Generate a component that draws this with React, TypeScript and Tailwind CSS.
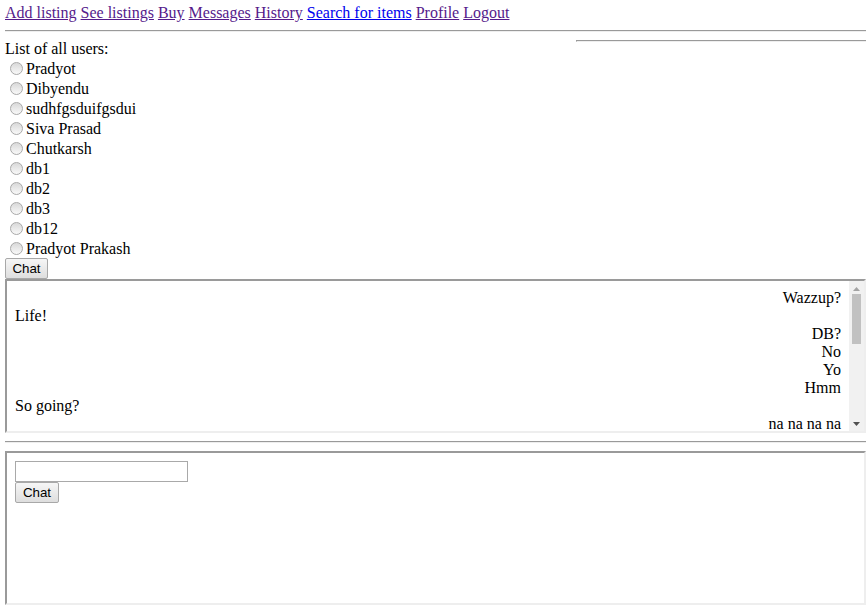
import React from "react";

const USERS = ["Pradyot", "Dibyendu", "sudhfgsduifgsdui", "Siva Prasad", "Chutkarsh", "db1", "db2", "db3", "db12", "Pradyot Prakash"];
const NAV = ["Add listing", "See listings", "Buy", "Messages", "History", "Search for items", "Profile", "Logout"];
const MSGS: { t: string; me: boolean }[] = [
  { t: "Wazzup?", me: true },
  { t: "Life!", me: false },
  { t: "DB?", me: true },
  { t: "No", me: true },
  { t: "Yo", me: true },
  { t: "Hmm", me: true },
  { t: "So going?", me: false },
  { t: "na na na na", me: true },
];

const BTN = "h-[21px] px-[6px] bg-linear-to-b from-[#f6f6f6] to-[#dedede] border border-[#a8a8a8] rounded-[2px] text-[13.33px] leading-none text-black [font-family:'Liberation_Sans',Arial,sans-serif]";
const FRAME = "w-[861px] h-[154px] border-2 border-t-[#9a9a9a] border-l-[#9a9a9a] border-b-[#eeeeee] border-r-[#eeeeee] overflow-hidden";

function Radio() {
  return <span className="ml-[5px] mr-[3px] w-[13px] h-[13px] rounded-full border border-[#a9a9a9] bg-linear-to-b from-[#d8d8d8] to-[#f9f9f9] shrink-0" />;
}

function Hr({ className = "" }: { className?: string }) {
  return <div className={`h-[2px] border-t border-t-[#9a9a9a] border-b border-b-[#eeeeee] ${className}`} />;
}

export default function App() {
  return (
    <div className="w-[866px] h-[607px] overflow-hidden bg-white text-black text-[16px] leading-[18px] [font-family:'Liberation_Serif','Times_New_Roman',serif] pl-[5px] pt-[4px]">
      <nav className="h-[18px] whitespace-nowrap">
        {NAV.map((n, i) => (
          <React.Fragment key={n}>
            <a href="#" className={`underline ${n === "Search for items" ? "text-[#0000ee]" : "text-[#551a8b]"}`}>{n}</a>
            {i < NAV.length - 1 && " "}
          </React.Fragment>
        ))}
      </nav>
      <Hr className="mt-[8px] mb-[8px] w-[861px]" />
      <div className="float-right w-[290px] h-[2px] border-t border-l border-t-[#9a9a9a] border-l-[#9a9a9a] border-b border-b-[#eeeeee]" />
      <div className="h-[18px]">List of all users:</div>
      <div>
        {USERS.map(u => (
          <label key={u} className="flex items-center h-[20px] pt-[1px]">
            <Radio />
            <span className="pt-[1px]">{u}</span>
          </label>
        ))}
      </div>
      <button className={`${BTN} w-[43px] block`}>Chat</button>
      <div className={`${FRAME} flex`}>
        <div className="flex-1 pt-[8px] px-[8px]">
          {MSGS.map((m, i) => (
            <div key={i} className={`h-[18px] ${m.me ? "text-right" : "text-left"}`}>{m.t}</div>
          ))}
        </div>
        <div className="w-[15px] bg-[#f1f1f1] flex flex-col items-center shrink-0">
          <div className="h-[15px] flex items-center justify-center">
            <svg width="7" height="4" viewBox="0 0 7 4"><path d="M0 4L3.5 0L7 4Z" fill="#a3a3a3" /></svg>
          </div>
          <div className="w-[9px] h-[50px] bg-[#c1c1c1] -mt-[2px]" />
          <div className="flex-1" />
          <div className="h-[15px] flex items-center justify-center">
            <svg width="7" height="4" viewBox="0 0 7 4"><path d="M0 0L3.5 4L7 0Z" fill="#505050" /></svg>
          </div>
        </div>
      </div>
      <Hr className="mt-[8px] mb-[8px] w-[861px]" />
      <div className={`${FRAME} pt-[8px] px-[8px]`}>
        <input className="block w-[173px] h-[21px] border border-[#a9a9a9] bg-white px-[2px] outline-none" />
        <button className={`${BTN} w-[44px] block`}>Chat</button>
      </div>
    </div>
  );
}
